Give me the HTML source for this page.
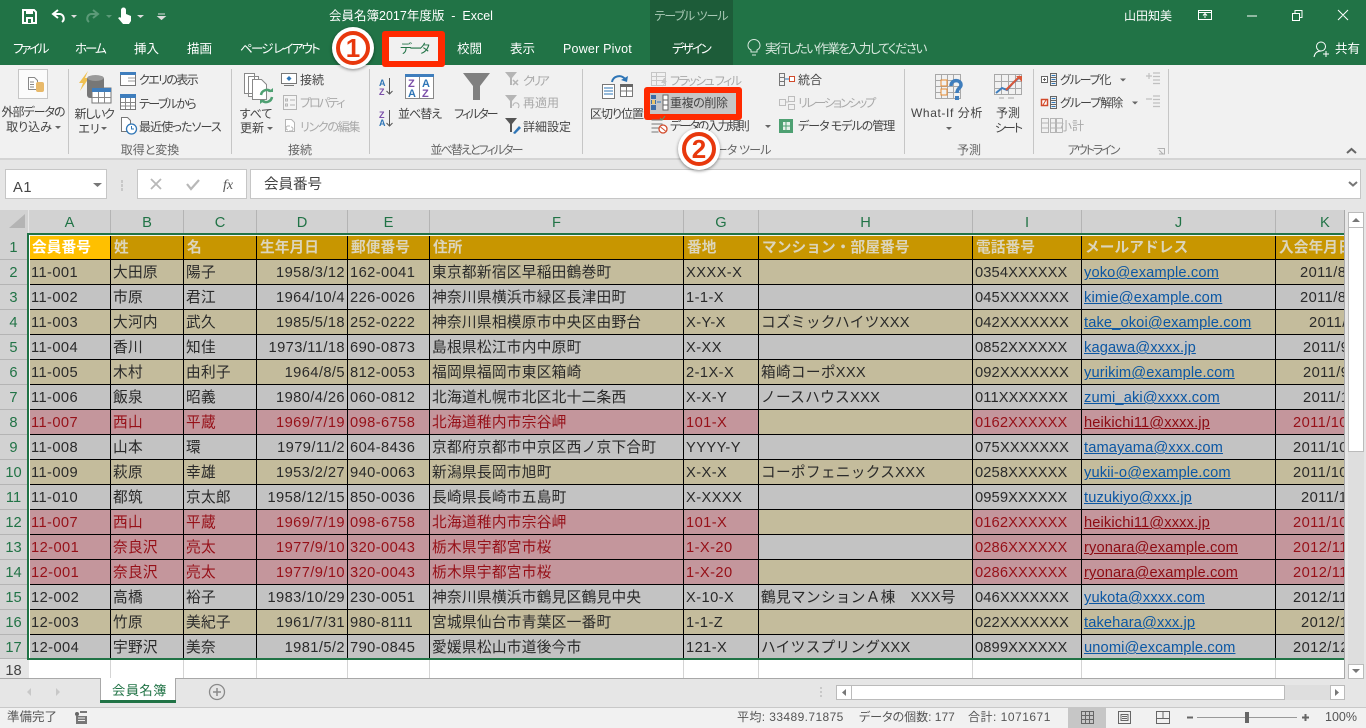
<!DOCTYPE html>
<html lang="ja"><head><meta charset="utf-8"><title>会員名簿2017年度版 - Excel</title>
<style>
html,body{margin:0;padding:0;width:1366px;height:728px;overflow:hidden;background:#e6e6e6}
body{position:relative;font-family:"Liberation Sans","Noto Sans CJK JP",sans-serif;color:#444}
.b{position:absolute}
.t{position:absolute;white-space:nowrap;line-height:16px;font-size:12px;color:#444;font-feature-settings:"palt"}
.c{transform:translateX(-50%)}
.w{color:#fff;font-size:12.5px}
.y{color:#a9a9a9}
svg{position:absolute;left:0;top:0}
#grid{position:absolute;left:29px;top:235px;width:1316px;height:425px;overflow:hidden}
table{border-collapse:separate;border-spacing:0;table-layout:fixed;width:1337px}
td{box-sizing:border-box;height:25px;padding:2px 2px 0;border-right:1px solid #000;border-bottom:1px solid #000;font-size:14.67px;line-height:22px;letter-spacing:.3px;white-space:nowrap;overflow:hidden;color:#2a2a2a}
tr.h td{background:#c89600;color:#dcd5bb;font-weight:bold;padding-left:3px;letter-spacing:.1px}
tr.h td.a{background:#ffc000;color:#fff}
tr.n td{background:#c4bc9c}
tr.g td{background:#c3c3c3}
tr td.r{background:#c4969c;color:#961018}
td.l{letter-spacing:.42px}
td.d{text-align:right;letter-spacing:.42px}
td.l:nth-child(9){letter-spacing:.12px}
td.m{letter-spacing:.12px;color:#0b57a4;text-decoration:underline}
td.m.r{color:#8c0a12}
.ch{position:absolute;top:210px;height:24px;line-height:26px;background:#d2d2d2;border-right:1px solid #b4b4b4;text-align:center;font-size:14.67px;color:#217346;box-sizing:border-box}
.rh{position:absolute;left:0;width:27px;height:25px;line-height:26px;background:#d2d2d2;border-bottom:1px solid #b4b4b4;text-align:center;font-size:14.67px;color:#217346;box-sizing:border-box}
.ln{position:absolute;top:660px;height:19px;width:1px;background:#d4d4d4}
.s{position:absolute;top:69px;height:85px;width:1px;background:#c6c6c6}
</style></head><body>
<div class="b" style="left:0;top:0;width:1366px;height:65px;background:#217346"></div>
<div class="b" style="left:650px;top:0;width:83px;height:65px;background:#1d5c39"></div>
<div class="b" style="left:0;top:65px;width:1366px;height:93px;background:#f1f1f1"></div>
<div class="b" style="left:0;top:158px;width:1366px;height:2px;background:#d4d4d4"></div>
<div class="s" style="left:68px"></div><div class="s" style="left:231px"></div><div class="s" style="left:369px"></div><div class="s" style="left:582px"></div><div class="s" style="left:904px"></div><div class="s" style="left:1033px"></div><div class="s" style="left:1168px"></div>

<div class="b" style="left:644px;top:87px;width:98px;height:33px;background:#ff2a00;border-radius:3px"></div>
<div class="b" style="left:650px;top:93px;width:86px;height:21px;background:#c6c6c6"></div>
<div class="b" style="left:382px;top:31px;width:63px;height:36px;background:#ff2a00;border-radius:3px"></div>
<div class="b" style="left:389px;top:37px;width:49px;height:24px;background:#f1f1f1"></div>
<!-- formula bar -->
<div class="b" style="left:5px;top:169px;width:102px;height:30px;background:#fff;border:1px solid #c6c6c6;box-sizing:border-box"></div>
<div class="b" style="left:137px;top:169px;width:110px;height:30px;background:#fff;border:1px solid #c6c6c6;box-sizing:border-box"></div>
<div class="b" style="left:250px;top:169px;width:1111px;height:30px;background:#fff;border:1px solid #c6c6c6;box-sizing:border-box"></div>
<div class="t" style="left:13px;top:180px;font-size:14.67px;letter-spacing:.6px">A1</div>
<div class="t" style="left:264px;top:177px;font-size:14.5px;font-feature-settings:normal">会員番号</div>

<!-- column headers -->
<div class="b" style="left:0;top:210px;width:28px;height:25px;background:#d2d2d2"></div>
<div class="ch" style="left:29px;width:82px">A</div><div class="ch" style="left:111px;width:73px">B</div><div class="ch" style="left:184px;width:73px">C</div><div class="ch" style="left:257px;width:91px">D</div><div class="ch" style="left:348px;width:82px">E</div><div class="ch" style="left:430px;width:254px">F</div><div class="ch" style="left:684px;width:75px">G</div><div class="ch" style="left:759px;width:214px">H</div><div class="ch" style="left:973px;width:109px">I</div><div class="ch" style="left:1082px;width:194px">J</div><div class="ch" style="left:1276px;width:69px;padding-left:44px;text-align:left">K</div>
<div class="rh" style="top:235px">1</div><div class="rh" style="top:260px">2</div><div class="rh" style="top:285px">3</div><div class="rh" style="top:310px">4</div><div class="rh" style="top:335px">5</div><div class="rh" style="top:360px">6</div><div class="rh" style="top:385px">7</div><div class="rh" style="top:410px">8</div><div class="rh" style="top:435px">9</div><div class="rh" style="top:460px">10</div><div class="rh" style="top:485px">11</div><div class="rh" style="top:510px">12</div><div class="rh" style="top:535px">13</div><div class="rh" style="top:560px">14</div><div class="rh" style="top:585px">15</div><div class="rh" style="top:610px">16</div><div class="rh" style="top:635px;height:24px">17</div>
<div class="rh" style="top:660px;height:19px;line-height:22px;background:#e6e6e6;color:#444;border:0;overflow:hidden">18</div>

<!-- row 18 -->
<div class="b" style="left:29px;top:660px;width:1316px;height:19px;background:#fff"></div>
<div class="ln" style="left:110px"></div><div class="ln" style="left:183px"></div><div class="ln" style="left:256px"></div><div class="ln" style="left:347px"></div><div class="ln" style="left:429px"></div><div class="ln" style="left:683px"></div><div class="ln" style="left:758px"></div><div class="ln" style="left:972px"></div><div class="ln" style="left:1081px"></div><div class="ln" style="left:1275px"></div>

<div id="grid"><table>
<colgroup><col style="width:82px"><col style="width:73px"><col style="width:73px"><col style="width:91px"><col style="width:82px"><col style="width:254px"><col style="width:75px"><col style="width:214px"><col style="width:109px"><col style="width:194px"><col style="width:90px"></colgroup>
<tr class="h"><td class="a">会員番号</td><td>姓</td><td>名</td><td>生年月日</td><td>郵便番号</td><td>住所</td><td>番地</td><td>マンション・部屋番号</td><td>電話番号</td><td>メールアドレス</td><td>入会年月日</td></tr>
<tr class="n"><td class="l">11-001</td><td>大田原</td><td>陽子</td><td class="d">1958/3/12</td><td class="l">162-0041</td><td>東京都新宿区早稲田鶴巻町</td><td class="l">XXXX-X</td><td></td><td class="l">0354XXXXXX</td><td class="m">yoko@example.com</td><td class="l" style="padding-left:24px">2011/8/10</td></tr>
<tr class="g"><td class="l">11-002</td><td>市原</td><td>君江</td><td class="d">1964/10/4</td><td class="l">226-0026</td><td>神奈川県横浜市緑区長津田町</td><td class="l">1-1-X</td><td></td><td class="l">045XXXXXXX</td><td class="m">kimie@example.com</td><td class="l" style="padding-left:24px">2011/8/15</td></tr>
<tr class="n"><td class="l">11-003</td><td>大河内</td><td>武久</td><td class="d">1985/5/18</td><td class="l">252-0222</td><td>神奈川県相模原市中央区由野台</td><td class="l">X-Y-X</td><td>コズミックハイツXXX</td><td class="l">042XXXXXXX</td><td class="m">take_okoi@example.com</td><td class="l" style="padding-left:33px">2011/9/1</td></tr>
<tr class="g"><td class="l">11-004</td><td>香川</td><td>知佳</td><td class="d">1973/11/18</td><td class="l">690-0873</td><td>島根県松江市内中原町</td><td class="l">X-XX</td><td></td><td class="l">0852XXXXXX</td><td class="m">kagawa@xxxx.jp</td><td class="l" style="padding-left:27px">2011/9/11</td></tr>
<tr class="n"><td class="l">11-005</td><td>木村</td><td>由利子</td><td class="d">1964/8/5</td><td class="l">812-0053</td><td>福岡県福岡市東区箱崎</td><td class="l">2-1X-X</td><td>箱崎コーポXXX</td><td class="l">092XXXXXXX</td><td class="m">yurikim@example.com</td><td class="l" style="padding-left:27px">2011/9/20</td></tr>
<tr class="g"><td class="l">11-006</td><td>飯泉</td><td>昭義</td><td class="d">1980/4/26</td><td class="l">060-0812</td><td>北海道札幌市北区北十二条西</td><td class="l">X-X-Y</td><td>ノースハウスXXX</td><td class="l">011XXXXXXX</td><td class="m">zumi_aki@xxxx.com</td><td class="l" style="padding-left:27px">2011/10/1</td></tr>
<tr class="n"><td class="l r">11-007</td><td class="r">西山</td><td class="r">平蔵</td><td class="d r">1969/7/19</td><td class="l r">098-6758</td><td class="r">北海道稚内市宗谷岬</td><td class="l r">101-X</td><td></td><td class="l r">0162XXXXXX</td><td class="m r">heikichi11@xxxx.jp</td><td class="l r" style="padding-left:17px">2011/10/10</td></tr>
<tr class="g"><td class="l">11-008</td><td>山本</td><td>環</td><td class="d">1979/11/2</td><td class="l">604-8436</td><td>京都府京都市中京区西ノ京下合町</td><td class="l">YYYY-Y</td><td></td><td class="l">075XXXXXXX</td><td class="m">tamayama@xxx.com</td><td class="l" style="padding-left:17px">2011/10/12</td></tr>
<tr class="n"><td class="l">11-009</td><td>萩原</td><td>幸雄</td><td class="d">1953/2/27</td><td class="l">940-0063</td><td>新潟県長岡市旭町</td><td class="l">X-X-X</td><td>コーポフェニックスXXX</td><td class="l">0258XXXXXX</td><td class="m">yukii-o@example.com</td><td class="l" style="padding-left:17px">2011/10/20</td></tr>
<tr class="g"><td class="l">11-010</td><td>都筑</td><td>京太郎</td><td class="d">1958/12/15</td><td class="l">850-0036</td><td>長崎県長崎市五島町</td><td class="l">X-XXXX</td><td></td><td class="l">0959XXXXXX</td><td class="m">tuzukiyo@xxx.jp</td><td class="l" style="padding-left:25px">2011/11/1</td></tr>
<tr class="n"><td class="l r">11-007</td><td class="r">西山</td><td class="r">平蔵</td><td class="d r">1969/7/19</td><td class="l r">098-6758</td><td class="r">北海道稚内市宗谷岬</td><td class="l r">101-X</td><td></td><td class="l r">0162XXXXXX</td><td class="m r">heikichi11@xxxx.jp</td><td class="l r" style="padding-left:17px">2011/10/10</td></tr>
<tr class="g"><td class="l r">12-001</td><td class="r">奈良沢</td><td class="r">亮太</td><td class="d r">1977/9/10</td><td class="l r">320-0043</td><td class="r">栃木県宇都宮市桜</td><td class="l r">1-X-20</td><td></td><td class="l r">0286XXXXXX</td><td class="m r">ryonara@example.com</td><td class="l r" style="padding-left:17px">2012/11/10</td></tr>
<tr class="n"><td class="l r">12-001</td><td class="r">奈良沢</td><td class="r">亮太</td><td class="d r">1977/9/10</td><td class="l r">320-0043</td><td class="r">栃木県宇都宮市桜</td><td class="l r">1-X-20</td><td></td><td class="l r">0286XXXXXX</td><td class="m r">ryonara@example.com</td><td class="l r" style="padding-left:17px">2012/11/10</td></tr>
<tr class="g"><td class="l">12-002</td><td>高橋</td><td>裕子</td><td class="d">1983/10/29</td><td class="l">230-0051</td><td>神奈川県横浜市鶴見区鶴見中央</td><td class="l">X-10-X</td><td>鶴見マンションＡ棟　XXX号</td><td class="l">046XXXXXXX</td><td class="m">yukota@xxxx.com</td><td class="l" style="padding-left:17px">2012/11/20</td></tr>
<tr class="n"><td class="l">12-003</td><td>竹原</td><td>美紀子</td><td class="d">1961/7/31</td><td class="l">980-8111</td><td>宮城県仙台市青葉区一番町</td><td class="l">1-1-Z</td><td></td><td class="l">022XXXXXXX</td><td class="m">takehara@xxx.jp</td><td class="l" style="padding-left:25px">2012/12/1</td></tr>
<tr class="g"><td class="l">12-004</td><td>宇野沢</td><td>美奈</td><td class="d">1981/5/2</td><td class="l">790-0845</td><td>愛媛県松山市道後今市</td><td class="l">121-X</td><td>ハイツスプリングXXX</td><td class="l">0899XXXXXX</td><td class="m">unomi@excample.com</td><td class="l" style="padding-left:17px">2012/12/10</td></tr>
</table></div>
<!-- selection border -->
<div class="b" style="left:27px;top:233px;width:1318px;height:2px;background:#217346"></div>
<div class="b" style="left:27px;top:233px;width:2px;height:427px;background:#217346"></div>
<div class="b" style="left:27px;top:658px;width:1318px;height:2px;background:#217346"></div>
<div class="b" style="left:29px;top:235px;width:1316px;height:1px;background:#f4f4ea"></div>
<div class="b" style="left:29px;top:235px;width:1px;height:423px;background:#fff"></div>

<!-- bottom bars -->
<div class="b" style="left:0;top:678px;width:1345px;height:1px;background:#a8a8a8"></div>
<div class="b" style="left:1344px;top:210px;width:1px;height:469px;background:#a8a8a8"></div>
<div class="b" style="left:0;top:679px;width:1345px;height:28px;background:#e6e6e6"></div>
<div class="b" style="left:100px;top:678px;width:76px;height:25px;background:#fff;border:1px solid #a8a8a8;border-top:0;border-bottom:0;box-sizing:border-box"></div>
<div class="b" style="left:100px;top:700px;width:76px;height:3px;background:#217346"></div>
<div class="t" style="left:112px;top:683px;font-size:13.3px;color:#217346;font-feature-settings:normal;letter-spacing:.4px">会員名簿</div>
<!-- scrollbars -->
<div class="b" style="left:1345px;top:210px;width:21px;height:497px;background:#e6e6e6"></div>
<div class="b" style="left:1348px;top:212px;width:16px;height:467px;background:#dedede"></div>
<div class="b" style="left:1348px;top:212px;width:16px;height:16px;background:#fff;border:1px solid #bbb;box-sizing:border-box"></div>
<div class="b" style="left:1348px;top:228px;width:16px;height:224px;background:#fff;border:1px solid #bbb;border-top:0;box-sizing:border-box"></div>
<div class="b" style="left:1348px;top:664px;width:16px;height:15px;background:#fff;border:1px solid #bbb;box-sizing:border-box"></div>
<div class="b" style="left:836px;top:685px;width:508px;height:15px;background:#dedede"></div>
<div class="b" style="left:836px;top:685px;width:16px;height:15px;background:#fff;border:1px solid #bbb;box-sizing:border-box"></div>
<div class="b" style="left:851px;top:685px;width:434px;height:15px;background:#fff;border:1px solid #bbb;box-sizing:border-box"></div>
<div class="b" style="left:1330px;top:685px;width:15px;height:15px;background:#fff;border:1px solid #bbb;box-sizing:border-box"></div>
<!-- status -->
<div class="b" style="left:0;top:707px;width:1366px;height:21px;background:#f1f1f1;border-top:1px solid #c8c8c8;box-sizing:border-box"></div>
<div class="b" style="left:1068px;top:707px;width:38px;height:21px;background:#c6c6c6"></div>
<div class="t" style="left:7px;top:709px;font-size:12.5px;color:#555;font-feature-settings:normal">準備完了</div>
<div class="t" style="left:737px;top:709px;font-size:12px;color:#555;letter-spacing:.4px">平均: 33489.71875</div>
<div class="t" style="left:859px;top:709px;font-size:12px;color:#555">データの個数: 177</div>
<div class="t" style="left:968px;top:709px;font-size:12px;color:#555;letter-spacing:.5px">合計: 1071671</div>
<div class="t" style="left:1325px;top:709px;font-size:12.5px;color:#555">100%</div>

<!-- title / tabs text -->
<div class="t c w" style="left:411px;top:8px;font-size:12.5px">会員名簿2017年度版&nbsp; -&nbsp; Excel</div>
<div class="t c" style="left:691px;top:8px;color:#a9c9b5;font-size:12px;letter-spacing:-1px">テーブル ツール</div>
<div class="t w" style="left:1124px;top:8px;font-size:12px">山田知美</div>
<div class="t w" style="left:13px;top:41px;letter-spacing:-2.300px">ファイル</div>
<div class="t w" style="left:75px;top:41px;letter-spacing:-2px">ホーム</div>
<div class="t w" style="left:134px;top:41px">挿入</div>
<div class="t w" style="left:187px;top:41px">描画</div>
<div class="t w" style="left:240px;top:41px;letter-spacing:-1.800px">ページ レイアウト</div>
<div class="t w" style="left:346px;top:41px">数式</div>
<div class="t" style="left:400px;top:41px;font-size:12.5px;color:#217346;letter-spacing:-2.500px">データ</div>
<div class="t w" style="left:457px;top:41px">校閲</div>
<div class="t w" style="left:510px;top:41px">表示</div>
<div class="t w" style="left:563px;top:41px;letter-spacing:.2px">Power Pivot</div>
<div class="t w" style="left:672px;top:41px;letter-spacing:-2px">デザイン</div>
<div class="t" style="left:765px;top:41px;color:#d8e8de;font-size:12.5px;letter-spacing:-1.600px">実行したい作業を入力してください</div>
<div class="t w" style="left:1335px;top:41px">共有</div>

<!-- ribbon text -->
<div class="t c" style="left:33px;top:104px;letter-spacing:-1px">外部データの</div>
<div class="t c" style="left:29px;top:119px">取り込み</div>
<div class="t c" style="left:94px;top:106px;letter-spacing:-1.300px">新しいク</div>
<div class="t c" style="left:89px;top:121px">エリ</div>
<div class="t" style="left:139px;top:72px;letter-spacing:-1.600px">クエリの表示</div>
<div class="t" style="left:139px;top:96px;letter-spacing:-1.600px">テーブルから</div>
<div class="t" style="left:139px;top:119px;letter-spacing:-.9px">最近使ったソース</div>
<div class="t c" style="left:256px;top:106px">すべて</div>
<div class="t c" style="left:252px;top:120px">更新</div>
<div class="t" style="left:300px;top:72px">接続</div>
<div class="t y" style="left:300px;top:95px;letter-spacing:-2px">プロパティ</div>
<div class="t y" style="left:300px;top:119px;letter-spacing:-1.300px">リンクの編集</div>
<div class="t" style="left:398px;top:106px;letter-spacing:-1px">並べ替え</div>
<div class="t" style="left:454px;top:106px;letter-spacing:-2px">フィルター</div>
<div class="t y" style="left:523px;top:73px;letter-spacing:-2.500px">クリア</div>
<div class="t y" style="left:523px;top:95px">再適用</div>
<div class="t" style="left:523px;top:119px">詳細設定</div>
<div class="t" style="left:590px;top:106px;letter-spacing:-1px">区切り位置</div>
<div class="t y" style="left:670px;top:73px;letter-spacing:-1.600px">フラッシュ フィル</div>
<div class="t" style="left:670px;top:95px;letter-spacing:-.4px">重複の削除</div>
<div class="t" style="left:670px;top:118px;letter-spacing:-1.900px">データの入力規則</div>
<div class="t" style="left:798px;top:72px">統合</div>
<div class="t y" style="left:798px;top:95px;letter-spacing:-2px">リレーションシップ</div>
<div class="t" style="left:798px;top:118px;letter-spacing:-1px">データ モデルの管理</div>
<div class="t" style="left:911px;top:105px;letter-spacing:.6px">What-If 分析</div>
<div class="t c" style="left:1008px;top:105px">予測</div>
<div class="t c" style="left:1008px;top:120px;letter-spacing:-2px">シート</div>
<div class="t" style="left:1060px;top:72px;letter-spacing:-1.200px">グループ化</div>
<div class="t" style="left:1060px;top:95px;letter-spacing:-1px">グループ解除</div>
<div class="t y" style="left:1060px;top:118px">小計</div>
<div class="t c" style="left:150px;top:142px;color:#666">取得と変換</div>
<div class="t c" style="left:300px;top:142px;color:#666">接続</div>
<div class="t c" style="left:476px;top:142px;color:#666;letter-spacing:-1.900px">並べ替えとフィルター</div>
<div class="t c" style="left:738px;top:142px;color:#666;letter-spacing:-.8px">データ ツール</div>
<div class="t c" style="left:969px;top:142px;color:#666">予測</div>
<div class="t c" style="left:1093px;top:142px;color:#666;letter-spacing:-2px">アウトライン</div>

<!-- icons -->
<svg width="1366" height="728" viewBox="0 0 1366 728" fill="none">
<!-- QAT -->
<path d="M23 10h11l2 2v11H23z" stroke="#fff" stroke-width="2"/><path d="M26 10h7v4h-7zM26 17h7v6h-7z" fill="#fff"/><path d="M28 19h3v4h-3z" fill="#217346"/>
<path d="M58 10l-5 4 5 4M53 14h7a4.5 4.5 0 0 1 2 8" stroke="#fff" stroke-width="2"/>
<path d="M71 15h6l-3 3z" fill="#ddd"/>
<path d="M93 10l5 4-5 4M98 14h-7a4.5 4.5 0 0 0-2 8" stroke="#5c9a78" stroke-width="2"/>
<path d="M106 15h6l-3 3z" fill="#5c9a78"/>
<path d="M121 10a2.5 2.5 0 0 1 5 0v4l5 2v5l-2 3h-6l-5-6 2-1 1 1z" fill="#fff"/>
<path d="M137 15h7l-3.500 3z" fill="#ddd"/>
<path d="M158 14h7M158 16.500h7l-3.500 3z" stroke="#ddd" stroke-width="1" fill="#ddd"/>
<!-- window controls -->
<path d="M1198.500 10.500h13v9h-13zM1198.500 12.500h13M1205 18v-4M1203 15.500l2-2 2 2" stroke="#fff"/>
<path d="M1247 16h10M1292.500 13.500h7v7h-7zM1295 13v-2.500h7v7h-2.500M1338 10l10 10M1348 10l-10 10" stroke="#fff"/>
<circle cx="1321" cy="46.500" r="4.500" stroke="#fff"/><path d="M1314 57c1-5 4-6 7-6M1323 54h6M1326 51v6" stroke="#fff"/>
<!-- lightbulb -->
<path d="M752 55h4M751 52h6v-2c2-1 3-3 3-4.500a6 6 0 0 0-12 0c0 1.500 1 3.500 3 4.500z" stroke="#d8e8de"/>
<!-- external data -->
<rect x="18.500" y="69.500" width="29" height="29" fill="#fbfbfb" stroke="#c6c6c6"/>
<path d="M28.500 77.500h6l3 3v9h-9z" fill="#fff" stroke="#888"/><path d="M30 82h4M30 84.500h4M30 87h4" stroke="#888"/>
<rect x="36" y="82" width="8" height="10" rx="2" fill="#e8b96a"/>
<path d="M55 126h6l-3 3z" fill="#666"/>
<!-- new query -->
<path d="M88 71l-9 12h4l-3 8 9-13h-4z" fill="#f0c050"/>
<rect x="87" y="76" width="17" height="22" rx="3" fill="#777"/><ellipse cx="95.500" cy="78" rx="8" ry="3" fill="#9a9a9a"/>
<rect x="92" y="88" width="19" height="15" fill="#fff" stroke="#777"/><rect x="92" y="88" width="19" height="4" fill="#3f7ebd"/><path d="M92 97.500h19M98.500 92v11M104.500 92v11" stroke="#888"/>
<path d="M101 127h6l-3 3z" fill="#666"/>
<!-- query show -->
<rect x="120.500" y="72.500" width="15" height="13" fill="#fff" stroke="#777"/><rect x="120" y="72" width="16" height="3" fill="#3f7ebd"/><path d="M128 78h7M128 81h7" stroke="#999"/>
<rect x="120.500" y="94.500" width="15" height="15" fill="#fff" stroke="#777"/><rect x="120" y="94" width="16" height="4" fill="#3f7ebd"/><path d="M121 102.500h14M121 106h14M125.500 98v11M130.500 98v11" stroke="#888"/>
<path d="M121.500 117.500h6l3 3v11h-9z" fill="#fff" stroke="#777"/><circle cx="131.500" cy="129" r="5" fill="#fff" stroke="#2e75b6" stroke-width="1.300"/><path d="M131.500 126v3h2.500" stroke="#2e75b6"/>
<!-- refresh all -->
<path d="M244.500 73.500h10v20h-10zM248.500 76.500h10v20h-10z" fill="#fff" stroke="#888"/><path d="M252.500 79.500h9l5 5v15h-14z" fill="#fff" stroke="#888"/>
<path d="M261 95a6 6 0 0 1 10-3.500M272 97a6 6 0 0 1-10 3.500" stroke="#4ea072" stroke-width="2.500"/><path d="M268 92h5v-4zM265 100h-5v4z" fill="#4ea072"/>
<path d="M267 127h6l-3 3z" fill="#666"/>
<!-- connections -->
<rect x="281.500" y="73.500" width="15" height="10" fill="#fff" stroke="#777"/><path d="M284 85.500h10" stroke="#777"/><path d="M289 76l2.500 2.500-2.500 2.500-2.500-2.500z" fill="#2e75b6"/>
<rect x="283.500" y="95.500" width="13" height="14" fill="#f4f4f4" stroke="#b5b5b5"/><path d="M285.500 99h2v2h-2zM285.500 104h2v2h-2zM290 100h5M290 105h5" stroke="#b5b5b5"/>
<path d="M285.500 119.500h6l3 3v9h-9z" fill="#fff" stroke="#b5b5b5"/><path d="M288 130a2 2 0 0 1 0-4h2M291 127a2 2 0 0 1 0 4h-2" stroke="#b5b5b5"/>
<!-- sorts -->
<g font-family="Liberation Sans,sans-serif" font-size="9" font-weight="bold">
<text x="379" y="86" fill="#2e75b6">A</text><text x="379" y="95" fill="#7a4ea8">Z</text>
<text x="379" y="118" fill="#7a4ea8">Z</text><text x="379" y="126" fill="#2e75b6">A</text></g>
<path d="M389.500 78v16M386.500 91l3 3 3-3M389.500 110v16M386.500 123l3 3 3-3" stroke="#555"/>
<rect x="405.500" y="74.500" width="28" height="24" fill="#fff" stroke="#888"/><rect x="405" y="74" width="29" height="3" fill="#3f7ebd"/><path d="M419.500 77v21" stroke="#888"/>
<g font-family="Liberation Sans,sans-serif" font-size="11" font-weight="bold"><text x="408" y="87" fill="#7a4ea8">Z</text><text x="408" y="97" fill="#2e75b6">A</text><text x="422" y="87" fill="#2e75b6">A</text><text x="422" y="97" fill="#7a4ea8">Z</text></g>
<!-- filter -->
<path d="M463 73h27l-10 13v14h-7V86z" fill="#808080"/>
<path d="M505 72h12l-5 6v7h-2v-7z" fill="#b5b5b5"/><path d="M513 80l5 5M518 80l-5 5" stroke="#b5b5b5" stroke-width="1.500"/>
<path d="M505 95h12l-5 6v7h-2v-7z" fill="#b5b5b5"/><path d="M513 106a3 3 0 1 1 5 2" stroke="#b5b5b5"/>
<path d="M505 118h12l-5 6v8h-2v-8z" fill="#555"/><path d="M513 133l6-7 2 2-6 6z" fill="#2e75b6"/>
<!-- text to columns -->
<path d="M602.500 85.500h12v14h-12z" fill="#fff" stroke="#777" transform="translate(0 -1)"/><path d="M604 88h9M604 91h9M604 94h9" stroke="#2e75b6"/>
<rect x="620.500" y="84.500" width="12" height="12" fill="#fff" stroke="#777"/><rect x="620" y="84" width="13" height="3" fill="#666"/><path d="M621 91h11M626.500 87v9" stroke="#777"/>
<path d="M612 82c1-6 9-8 13-3" stroke="#2e75b6" stroke-width="2"/><path d="M621 80l6 2 1-6z" fill="#2e75b6"/>
<!-- flash fill -->
<path d="M651.500 72.500h14v13h-14zM651 76.500h14M651 80.500h14M656.500 73v12" stroke="#c6c6c6"/><path d="M664 78l-3 5h3l-2 4 5-6h-3l2-3z" fill="#c6c6c6"/>
<!-- remove dup -->
<rect x="651" y="95" width="5" height="15" fill="#3d6da6"/><path d="M651 99.500h5M651 104.500h5" stroke="#c9c9c9"/><rect x="652" y="100" width="3" height="4" fill="#e9c46a"/>
<rect x="663" y="95" width="5" height="15" fill="#fff" stroke="#666"/><path d="M663 100h5M663 105h5" stroke="#666"/><path d="M657 102h4" stroke="#2e75b6"/>
<!-- validation -->
<path d="M651.500 120h11M651.500 124h11M651.500 128h7M651.500 132h7" stroke="#777"/><path d="M660 118l2 2 3-4" stroke="#4ea072"/><circle cx="663" cy="129" r="4" fill="#fff" stroke="#d14a2b" stroke-width="1.300"/><path d="M660.500 127l5 4" stroke="#d14a2b"/>
<!-- consolidate -->
<path d="M779.500 73.500h5v12h-5zM779.500 77.500h5M779.500 81.500h5" stroke="#777"/><rect x="789.500" y="76.500" width="5" height="5" stroke="#d14a2b" fill="#fff"/><path d="M785 79h4" stroke="#2e75b6"/>
<!-- relationships -->
<path d="M779.500 99.500h6v6h-6zM788.500 96.500h6v5h-6zM788.500 104.500h6v5h-6zM785.500 102h3" stroke="#bdbdbd"/>
<!-- data model -->
<path d="M779 119h14v14h-14z" fill="#4ea072"/><path d="M783 122h7v8h-7z" fill="#e6f1ea"/><path d="M786 122v8M783 126h7" stroke="#4ea072"/>
<path d="M765 125h6l-3 3z" fill="#666"/>
<!-- what-if -->
<path d="M935.500 74.500h25v24h-25zM941.500 75v24M947.500 75v24M953.500 75v24M936 80.500h25M936 86.500h25M936 92.500h25" stroke="#a8a8a8"/>
<rect x="941" y="80" width="6" height="6" stroke="#e68a2e" fill="#f1f1f1"/><rect x="941" y="89" width="6" height="6" stroke="#e68a2e" fill="#f1f1f1"/>
<path d="M951 86c0-7 10-7 10-1 0 3-4 3-4 8" stroke="#3f7ebd" stroke-width="3.500" fill="none"/><rect x="955" y="96" width="4" height="4" fill="#3f7ebd"/>
<path d="M946 127h6l-3 3z" fill="#666"/>
<!-- forecast -->
<path d="M994.500 74.500h27v20h-27zM1001.500 75v20M1008.500 75v20M1015.500 75v20M995 81.500h26M995 88.500h26" stroke="#a8a8a8"/>
<path d="M996 93l6-5 5 2 6-7 7-6" stroke="#3f7ebd" stroke-width="2"/><path d="M1006 90l7-7 7-7" stroke="#d9583a" stroke-width="2"/><path d="M1016 76h6v6z" fill="#d9583a"/>
<path d="M999 98h5M1008 98h6" stroke="#a8a8a8"/>
<!-- group -->
<rect x="1041.500" y="76.500" width="6" height="6" fill="#fff" stroke="#666"/><path d="M1043 79.500h3M1044.500 78v3M1050.500 73.500h6v12h-6zM1051 77.500h5M1051 81.500h5" stroke="#666"/><path d="M1051.500 75.500h4M1051.500 79.500h4M1051.500 83.500h4" stroke="#2e75b6"/>
<rect x="1041.500" y="99.500" width="6" height="6" fill="#fff" stroke="#d14a2b" stroke-width="1.500"/><path d="M1043 105l3-5" stroke="#d14a2b"/><path d="M1050.500 96.500h6v12h-6zM1051 100.500h5M1051 104.500h5" stroke="#666"/><path d="M1051.500 98.500h4M1051.500 102.500h4M1051.500 106.500h4" stroke="#2e75b6"/>
<path d="M1041.500 118.500h7v14h-7zM1041.500 123h7M1041.500 128h7M1050.500 118.500h5v14h-5zM1050.500 123h12M1050.500 128h12M1062.500 118.500v14M1050.500 118.500h12M1050.500 132.500h12M1056.500 118v15" stroke="#b5b5b5"/>
<path d="M1120 78.500h6l-3 3z" fill="#666"/><path d="M1132 101.500h6l-3 3z" fill="#666"/>
<path d="M1146 76h6M1149 73v6M1153 73h7M1153 76.500h7M1153 80h7M1153 83.500h7" stroke="#c0c0c0" stroke-width="1.200"/>
<path d="M1146 99h6M1153 96h7M1153 99.500h7M1153 103h7M1153 106.500h7" stroke="#c0c0c0" stroke-width="1.200"/>
<path d="M1157.500 148.500h7v6M1159 150l4 4M1159 154h5" stroke="#b0b0b0"/>
<path d="M1347 153l4.500-4 4.500 4" stroke="#666" stroke-width="2"/>
<!-- formula bar -->
<path d="M93 183h9l-4.500 4z" fill="#777"/>
<path d="M122 180v3M122 184v3M122 188v3" stroke="#aaa"/>
<path d="M151 179l10 10M161 179l-10 10" stroke="#b8b8b8" stroke-width="1.800"/>
<path d="M187 184l4 5 8-9" stroke="#b8b8b8" stroke-width="2.200"/>
<text x="223" y="189" font-family="Liberation Serif,serif" font-style="italic" font-size="14" fill="#555">fx</text>
<path d="M1349 182l4 3.500 4-3.500" stroke="#777" stroke-width="2"/>
<!-- corner -->
<path d="M25 214v14H9z" fill="#b4b4b4"/>
<!-- scroll arrows -->
<path d="M1352 222l4-4 4 4z" fill="#777"/><path d="M1352 669h8l-4 4z" fill="#777"/>
<path d="M846 689v7l-4-3.500z" fill="#777"/><path d="M1335 689v7l4-3.500z" fill="#777"/>
<path d="M31 688v8l-4-4zM56 688v8l4-4z" fill="#c8c8c8"/>
<circle cx="217" cy="692" r="7.500" stroke="#8a8a8a" stroke-width="1.300"/><path d="M213 692h8M217 688v8" stroke="#8a8a8a" stroke-width="1.500"/>
<path d="M821 687v2M821 691v2M821 695v2" stroke="#aaa"/>
<!-- status icons -->
<rect x="75" y="712" width="4" height="4" rx="2" fill="#666"/><path d="M80 711h7v2h-7zM76 716h11v8H76z" fill="#777"/><path d="M78 718h7M78 720.500h7" stroke="#eee"/>
<path d="M1081.500 711.500h12v12h-12zM1085.500 712v11M1089.500 712v11M1082 715.500h11M1082 719.500h11" stroke="#666"/>
<path d="M1118.500 711.500h12v12h-12zM1121 714.500h7v6h-7z" stroke="#666"/><path d="M1122 716.500h5M1122 718.500h5" stroke="#666"/>
<path d="M1156.500 711.500h13v12h-13zM1163 712v6M1157 718.500h12" stroke="#666"/>
<path d="M1187 717.500h6" stroke="#666" stroke-width="2"/><path d="M1197 717.500h100" stroke="#999"/><rect x="1245" y="712" width="4" height="11" fill="#666"/>
<path d="M1302 717.500h7M1305.500 714v7" stroke="#666" stroke-width="2"/>
</svg>

<!-- callouts -->
<div class="b" style="left:332px;top:27px;width:42px;height:42px;border-radius:50%;background:#fff;box-shadow:0 1px 3px rgba(0,0,0,.45)"></div>
<div class="b" style="left:336px;top:31px;width:34px;height:34px;border-radius:50%;border:4px solid #e8380d;box-sizing:border-box;background:#fff;color:#e8380d;font:bold 26px/26px 'Liberation Sans',sans-serif;text-align:center">1</div>
<div class="b" style="left:678px;top:128px;width:42px;height:42px;border-radius:50%;background:#fff;box-shadow:0 1px 3px rgba(0,0,0,.45)"></div>
<div class="b" style="left:682px;top:132px;width:34px;height:34px;border-radius:50%;border:4px solid #e8380d;box-sizing:border-box;background:#fff;color:#e8380d;font:bold 26px/26px 'Liberation Sans',sans-serif;text-align:center">2</div>
</body></html>
